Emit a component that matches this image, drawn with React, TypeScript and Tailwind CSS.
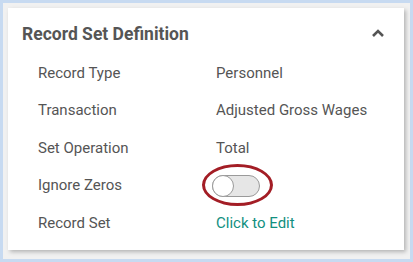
import React from 'react';

const rows: { label: string; value?: string; link?: boolean; toggle?: boolean }[] = [
  { label: 'Record Type', value: 'Personnel' },
  { label: 'Transaction', value: 'Adjusted Gross Wages' },
  { label: 'Set Operation', value: 'Total' },
  { label: 'Ignore Zeros', toggle: true },
  { label: 'Record Set', value: 'Click to Edit', link: true },
];

export default function App() {
  return (
    <div className="w-[413px] h-[262px] bg-[#c7daf1] p-[3px] font-['Roboto',sans-serif]">
      <div className="w-full h-full bg-[#f1f1f1] pt-[5px] pl-[5px] pr-[5px] pb-[6px]">
        <div className="w-[396px] h-[242px] bg-white shadow-[2px_2px_4px_rgba(0,0,0,0.25)]">
          <div className="flex items-center justify-between pl-[14px] pr-[19px] pt-[7px] h-[45px]">
            <h2 className="text-[17.5px] font-bold text-[#555555]">Record Set Definition</h2>
            <svg width="14" height="10" viewBox="0 0 14 10" className="mt-[-2px]">
              <path d="M2 8 L7 3 L12 8" fill="none" stroke="#555555" strokeWidth="2.6" />
            </svg>
          </div>
          <div className="pl-[30px] pt-[1px]">
            {rows.map((r) => (
              <div key={r.label} className="flex items-center h-[37.5px]">
                <div className="w-[178px] text-[15px] text-[#555555]">{r.label}</div>
                {r.toggle ? (
                  <div className="relative ml-[-4px] mt-[1px]">
                    <div className="w-[48px] h-[22px] rounded-full bg-[#e6e6e6] border border-[#9a9a9a] relative">
                      <div className="absolute left-[-1px] top-[-1px] w-[22px] h-[22px] rounded-full bg-white border border-[#9a9a9a]" />
                    </div>
                    <div className="absolute left-[-10px] top-[-11px] w-[71px] h-[42px] rounded-[50%] border-[3px] border-[#a31d25]" />
                  </div>
                ) : (
                  <div className={`text-[15px] ${r.link ? 'text-[#12907f]' : 'text-[#555555]'}`}>{r.value}</div>
                )}
              </div>
            ))}
          </div>
        </div>
      </div>
    </div>
  );
}
